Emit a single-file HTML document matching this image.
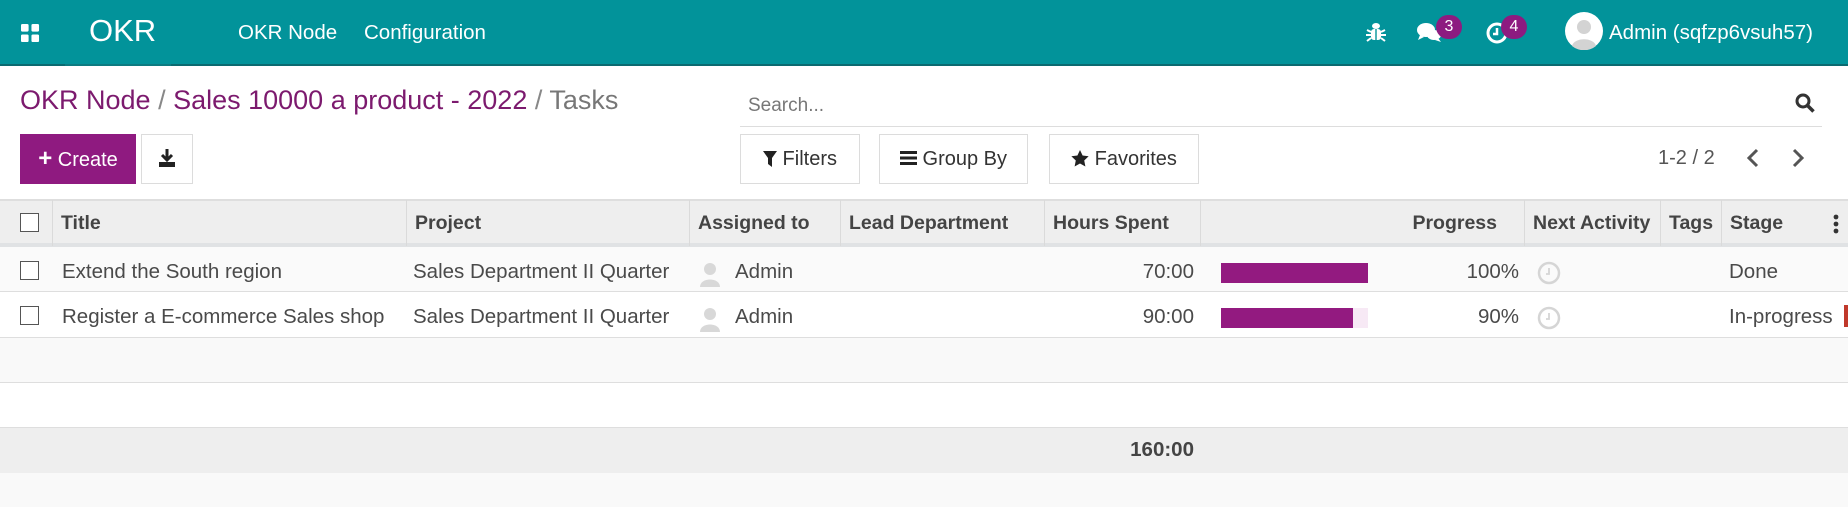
<!DOCTYPE html>
<html><head><meta charset="utf-8"><style>
*{box-sizing:border-box;margin:0;padding:0}
body{width:1848px;height:507px;overflow:hidden;background:#fff;font-family:"Liberation Sans",sans-serif;color:#4c4c4c;position:relative}
.a{position:absolute;white-space:nowrap}
.nav{position:absolute;left:0;top:0;width:1848px;height:66px;background:#02939a;border-bottom:2px solid #0b6a70}
.nav .t{color:#fff;font-size:20.5px;top:21px}
.btn{position:absolute;top:134px;height:50px;border:1px solid #dcdcdc;background:#fff;font-size:20px;color:#333;line-height:48px;text-align:center}
.th{position:absolute;top:200px;height:46px;font-weight:bold;font-size:19.5px;color:#444;line-height:46px;border-right:1px solid #dadada;padding-left:8px}
.cb{position:absolute;width:19px;height:19px;border:1.5px solid #555;background:#fff;left:20px}
.td{position:absolute;font-size:20.5px;color:#4a4a4a}
</style></head><body>
<div class="nav">
  <svg class="a" style="left:21px;top:24px" width="19" height="19" viewBox="0 0 20 20" fill="#fff"><rect x="0" y="0" width="8" height="8" rx="1.5"/><rect x="11" y="0" width="8" height="8" rx="1.5"/><rect x="0" y="11" width="8" height="8" rx="1.5"/><rect x="11" y="11" width="8" height="8" rx="1.5"/></svg>
  <div class="a t" style="left:89px;top:13px;font-size:31px">OKR</div>
  <div class="a" style="left:65px;top:64px;width:106px;height:2px;background:#0d7b81"></div>
  <div class="a t" style="left:238px">OKR Node</div>
  <div class="a t" style="left:364px">Configuration</div>
  <svg class="a" style="left:1366px;top:21px" width="20" height="22" viewBox="0 0 20 22" fill="#fff"><ellipse cx="10" cy="5" rx="4" ry="3"/><rect x="5" y="8" width="10" height="11" rx="3"/><path d="M1 9l4 2M19 9l-4 2M0 14h5M20 14h-5M1 20l4-3M19 20l-4-3" stroke="#fff" stroke-width="2"/><rect x="9.3" y="8" width="1.4" height="11" fill="#02939a"/></svg>
  <svg class="a" style="left:1416px;top:21px" width="28" height="24" viewBox="0 0 28 24" fill="#fff"><ellipse cx="10" cy="9" rx="9" ry="7"/><path d="M4 14l-2 5 6-3z"/><ellipse cx="18" cy="14" rx="7" ry="5"/><path d="M22 17l3 4-6-2z"/></svg>
  <div class="a" style="left:1436px;top:15px;width:26px;height:24px;border-radius:12px;background:#8d1b80;color:#fff;font-size:16px;text-align:center;line-height:24px">3</div>
  <svg class="a" style="left:1485px;top:21px" width="24" height="24" viewBox="0 0 24 24"><circle cx="12" cy="12" r="9" fill="none" stroke="#fff" stroke-width="3"/><path d="M12 7v6h-4" stroke="#fff" stroke-width="2.5" fill="none"/></svg>
  <div class="a" style="left:1501px;top:15px;width:26px;height:24px;border-radius:12px;background:#8d1b80;color:#fff;font-size:16px;text-align:center;line-height:24px">4</div>
  <svg class="a" style="left:1565px;top:12px" width="38" height="38" viewBox="0 0 38 38"><circle cx="19" cy="19" r="19" fill="#fff"/><circle cx="19" cy="15" r="7" fill="#d3d3d3"/><path d="M7 34c2-9 22-9 24 0a19 19 0 0 1-24 0z" fill="#d3d3d3"/></svg>
  <div class="a t" style="left:1609px">Admin (sqfzp6vsuh57)</div>
</div>
<div class="a" style="left:20px;top:85px;font-size:27px;color:#7c1a6e">OKR Node <span style="color:#888">/</span> Sales 10000 a product - 2022 <span style="color:#888">/</span> <span style="color:#777">Tasks</span></div>
<div class="a" style="left:748px;top:95px;font-size:19px;color:#777">Search...</div>
<div class="a" style="left:740px;top:126px;width:1082px;height:1px;background:#ddd"></div>
<svg class="a" style="left:1795px;top:93px" width="20" height="20" viewBox="0 0 20 20"><circle cx="8" cy="8" r="6" fill="none" stroke="#333" stroke-width="3"/><path d="M12.5 12.5l6 6" stroke="#333" stroke-width="3.5"/></svg>
<div class="btn" style="left:20px;width:116px;background:#8f1a80;border-color:#8f1a80;color:#fff"><b style="font-size:24px">+</b> Create</div>
<div class="btn" style="left:141px;width:52px"><svg width="20" height="20" viewBox="0 0 20 20" style="vertical-align:-3px"><path d="M10 1v10M5 7l5 5 5-5" stroke="#222" stroke-width="3" fill="none"/><rect x="2" y="14" width="16" height="5" fill="#222"/></svg></div>
<div class="btn" style="left:740px;width:120px"><svg width="14" height="16" viewBox="0 0 14 16" style="vertical-align:-2px"><path d="M0 0h14L9 7v9L5 13V7z" fill="#222"/></svg> Filters</div>
<div class="btn" style="left:879px;width:149px"><svg width="17" height="14" viewBox="0 0 17 14" style="vertical-align:0"><rect y="0" width="17" height="3" fill="#222"/><rect y="5.5" width="17" height="3" fill="#222"/><rect y="11" width="17" height="3" fill="#222"/></svg> Group By</div>
<div class="btn" style="left:1049px;width:150px"><svg width="18" height="17" viewBox="0 0 24 23" style="vertical-align:-2px"><path d="M12 0l3.5 7.5 8.2 1-6 5.7 1.6 8.1L12 18.3 4.7 22.3l1.6-8.1-6-5.7 8.2-1z" fill="#222"/></svg> Favorites</div>
<div class="a" style="left:1658px;top:147px;font-size:20px;color:#555">1-2 / 2</div>
<svg class="a" style="left:1746px;top:148px" width="14" height="20" viewBox="0 0 14 20"><path d="M11 2L3 10l8 8" stroke="#555" stroke-width="3" fill="none"/></svg>
<svg class="a" style="left:1791px;top:148px" width="14" height="20" viewBox="0 0 14 20"><path d="M3 2l8 8-8 8" stroke="#555" stroke-width="3" fill="none"/></svg>

<div class="a" style="left:0;top:199px;width:1848px;height:48px;background:#eee;border-top:2px solid #dedede;border-bottom:4px solid #e0e2e4"></div>
<div class="cb" style="top:213px"></div>
<div class="th" style="left:0;width:53px;padding:0"></div>
<div class="th" style="left:53px;width:354px">Title</div>
<div class="th" style="left:407px;width:283px">Project</div>
<div class="th" style="left:690px;width:151px">Assigned to</div>
<div class="th" style="left:841px;width:204px">Lead Department</div>
<div class="th" style="left:1045px;width:156px">Hours Spent</div>
<div class="th" style="left:1201px;width:324px;text-align:right;padding-right:27px">Progress</div>
<div class="th" style="left:1525px;width:136px">Next Activity</div>
<div class="th" style="left:1661px;width:61px">Tags</div>
<div class="th" style="left:1722px;width:126px;border:none">Stage</div>
<svg class="a" style="left:1833px;top:214px" width="6" height="20" viewBox="0 0 6 20" fill="#333"><circle cx="3" cy="3" r="2.4"/><circle cx="3" cy="10" r="2.4"/><circle cx="3" cy="17" r="2.4"/></svg>

<div class="a" style="left:0;top:247px;width:1848px;height:45px;background:#fafafa;border-bottom:1px solid #dedede"></div>
<div class="a" style="left:0;top:292px;width:1848px;height:46px;background:#fff;border-bottom:1px solid #dedede"></div>
<div class="a" style="left:0;top:338px;width:1848px;height:45px;background:#f9f9f9;border-bottom:1px solid #dedede"></div>
<div class="a" style="left:0;top:383px;width:1848px;height:45px;background:#fff;border-bottom:1px solid #dedede"></div>
<div class="a" style="left:0;top:428px;width:1848px;height:45px;background:#eee"></div>
<div class="a" style="left:0;top:473px;width:1848px;height:34px;background:#f9f9f9"></div>
<div class="a" style="left:1844px;top:305px;width:4px;height:22px;background:#c0392b"></div>

<div class="cb" style="top:261px"></div>
<div class="cb" style="top:306px"></div>
<div class="td" style="left:62px;top:260px">Extend the South region</div>
<div class="td" style="left:62px;top:305px">Register a E-commerce Sales shop</div>
<div class="td" style="left:413px;top:260px">Sales Department II Quarter</div>
<div class="td" style="left:413px;top:305px">Sales Department II Quarter</div>
<svg class="a" style="left:698px;top:260px" width="24" height="28" viewBox="0 0 24 28"><circle cx="12" cy="9" r="6" fill="#d8d8d8"/><path d="M2 27c0-10 20-10 20 0z" fill="#d8d8d8"/></svg>
<svg class="a" style="left:698px;top:305px" width="24" height="28" viewBox="0 0 24 28"><circle cx="12" cy="9" r="6" fill="#d8d8d8"/><path d="M2 27c0-10 20-10 20 0z" fill="#d8d8d8"/></svg>
<div class="td" style="left:735px;top:260px">Admin</div>
<div class="td" style="left:735px;top:305px">Admin</div>
<div class="td" style="left:1060px;top:260px;width:134px;text-align:right">70:00</div>
<div class="td" style="left:1060px;top:305px;width:134px;text-align:right">90:00</div>
<div class="a" style="left:1221px;top:263px;width:147px;height:20px;background:#931a80"></div>
<div class="a" style="left:1221px;top:308px;width:147px;height:20px;background:#f7e9f5"></div>
<div class="a" style="left:1221px;top:308px;width:132px;height:20px;background:#931a80"></div>
<div class="td" style="left:1400px;top:260px;width:119px;text-align:right">100%</div>
<div class="td" style="left:1400px;top:305px;width:119px;text-align:right">90%</div>
<svg class="a" style="left:1537px;top:261px" width="24" height="24" viewBox="0 0 24 24"><circle cx="12" cy="12" r="10" fill="none" stroke="#d5d5d5" stroke-width="2.5"/><path d="M12 7v6h-3" stroke="#d5d5d5" stroke-width="1.8" fill="none"/></svg>
<svg class="a" style="left:1537px;top:306px" width="24" height="24" viewBox="0 0 24 24"><circle cx="12" cy="12" r="10" fill="none" stroke="#d5d5d5" stroke-width="2.5"/><path d="M12 7v6h-3" stroke="#d5d5d5" stroke-width="1.8" fill="none"/></svg>
<div class="td" style="left:1729px;top:260px">Done</div>
<div class="td" style="left:1729px;top:305px">In-progress</div>
<div class="td" style="left:1060px;top:438px;width:134px;text-align:right;font-weight:bold;color:#444">160:00</div>
</body></html>
